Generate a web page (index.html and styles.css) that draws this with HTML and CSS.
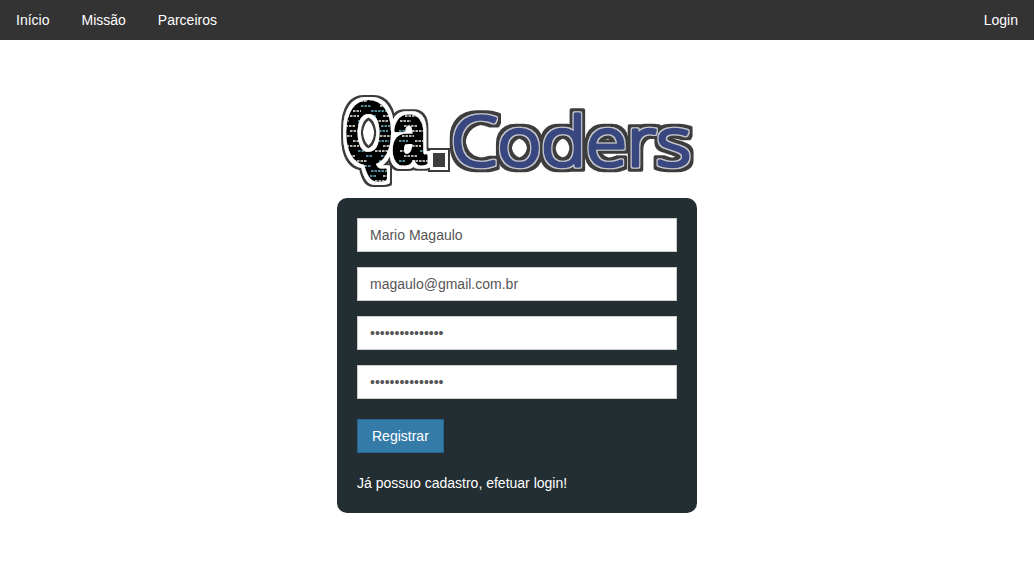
FILE: index.html
```html
<!DOCTYPE html>
<html lang="pt-BR">
<head>
<meta charset="utf-8">
<title>Qa.Coders</title>
<link rel="stylesheet" href="styles.css">
</head>
<body>
<nav class="navbar">
  <ul class="nav-list">
    <li><a href="#">Início</a></li>
    <li><a href="#">Missão</a></li>
    <li><a href="#">Parceiros</a></li>
  </ul>
  <ul class="nav-list">
    <li><a href="#">Login</a></li>
  </ul>
</nav>
<main class="page">
  <svg class="logo" width="360" height="108" viewBox="0 -8 360 108" role="img" aria-label="Qa.Coders">
    <defs>
      <pattern id="code" width="62" height="30" patternUnits="userSpaceOnUse">
        <rect width="62" height="30" fill="#050505"/>
        <path class="code-a" d="M1 3h11M38 3h13M5 8h14M13 13h17M3 18h12M43 18h15M16 23h8M6 28h16M46 28h10"/>
        <path class="code-b" d="M21 3h7M29 8h6M44 8h11M0 13h7M42 13h9M24 18h10M0 23h9M34 23h18M33 28h6"/>
      </pattern>
      <filter id="qa-outline" filterUnits="userSpaceOnUse" x="0" y="-8" width="360" height="108">
        <feMorphology in="SourceAlpha" operator="dilate" radius="4.5" result="a"/>
        <feFlood flood-color="#3a3a3a"/><feComposite in2="a" operator="in" result="dark"/>
        <feMorphology in="SourceAlpha" operator="dilate" radius="2.5" result="b"/>
        <feFlood flood-color="#ffffff"/><feComposite in2="b" operator="in" result="white"/>
        <feMerge result="m"><feMergeNode in="dark"/><feMergeNode in="white"/><feMergeNode in="SourceGraphic"/></feMerge>
        <feGaussianBlur in="m" stdDeviation="0.6"/>
      </filter>
      <filter id="coders-outline" filterUnits="userSpaceOnUse" x="0" y="-8" width="360" height="108">
        <feMorphology in="SourceAlpha" operator="dilate" radius="3.5" result="a"/>
        <feFlood flood-color="#3c3c3e"/><feComposite in2="a" operator="in" result="dark"/>
        <feMorphology in="SourceAlpha" operator="dilate" radius="1" result="b"/>
        <feFlood flood-color="#c4c8d0"/><feComposite in2="b" operator="in" result="light"/>
        <feMerge result="m"><feMergeNode in="dark"/><feMergeNode in="light"/><feMergeNode in="SourceGraphic"/></feMerge>
        <feGaussianBlur in="m" stdDeviation="0.6"/>
      </filter>
    </defs>
    <g filter="url(#qa-outline)">
      <text class="qa" x="8" y="75" textLength="81" lengthAdjust="spacingAndGlyphs">Qa</text>
      <rect class="dot" x="96" y="65" width="12" height="14"/>
    </g>
    <g filter="url(#coders-outline)">
      <text class="coders" x="114" y="78" textLength="240" lengthAdjust="spacingAndGlyphs">Coders</text>
    </g>
  </svg>
  <form class="card">
    <input class="field" type="text" value="Mario Magaulo">
    <input class="field" type="text" value="magaulo@gmail.com.br">
    <input class="field" type="password" value="123456789012345">
    <input class="field" type="password" value="123456789012345">
    <button class="submit" type="button">Registrar</button>
    <p class="signin">Já possuo cadastro, efetuar login!</p>
  </form>
</main>
</body>
</html>
```
FILE: styles.css
```css
* { box-sizing: border-box; }
body {
  margin: 0;
  background: #fff;
  font-family: "Liberation Sans", Arial, sans-serif;
  font-size: 14px;
  line-height: 20px;
  color: #333;
}
.navbar {
  display: flex;
  justify-content: space-between;
  height: 40px;
  background: #333;
}
.nav-list {
  display: flex;
  margin: 0;
  padding: 0;
  list-style: none;
}
.nav-list a {
  display: block;
  padding: 10px 16px;
  color: #fff;
  text-decoration: none;
}
.page {
  display: flex;
  flex-direction: column;
  align-items: center;
  padding-top: 40px;
}
.logo {
  display: block;
  margin-bottom: 10px;
}
.code-a, .code-b {
  fill: none;
  stroke-width: 1.8px;
  stroke-dasharray: 2.5 1;
}
.code-a { stroke: #b0b6ae; }
.code-b { stroke: #4f8a96; }
.qa {
  font-family: "Liberation Sans", sans-serif;
  font-weight: 700;
  font-size: 88px;
  fill: url(#code);
  stroke: url(#code);
  stroke-width: 4px;
  stroke-linejoin: round;
}
.coders {
  font-family: "Open Sans", "DejaVu Sans", sans-serif;
  font-weight: 300;
  font-size: 68px;
  fill: #37477f;
  stroke: #37477f;
  stroke-width: 3.5px;
  stroke-linejoin: round;
  stroke-linecap: round;
}
.dot { fill: #3c3c40; }
.card {
  display: flex;
  flex-direction: column;
  gap: 15px;
  width: 360px;
  padding: 20px;
  background: #232e33;
  border-radius: 10px;
}
.field {
  display: block;
  width: 320px;
  height: 34px;
  padding: 6px 12px;
  border: 1px solid #ccc;
  background: #fff;
  color: #555;
  font: inherit;
  border-radius: 0;
}
.submit {
  align-self: flex-start;
  height: 34px;
  margin-top: 5px;
  padding: 6px 14px;
  border: 1px solid #2a6390;
  background: #347ba8;
  color: #fff;
  font: inherit;
  border-radius: 0;
}
.signin {
  margin: 5px 0 0;
  color: #fff;
}
```
